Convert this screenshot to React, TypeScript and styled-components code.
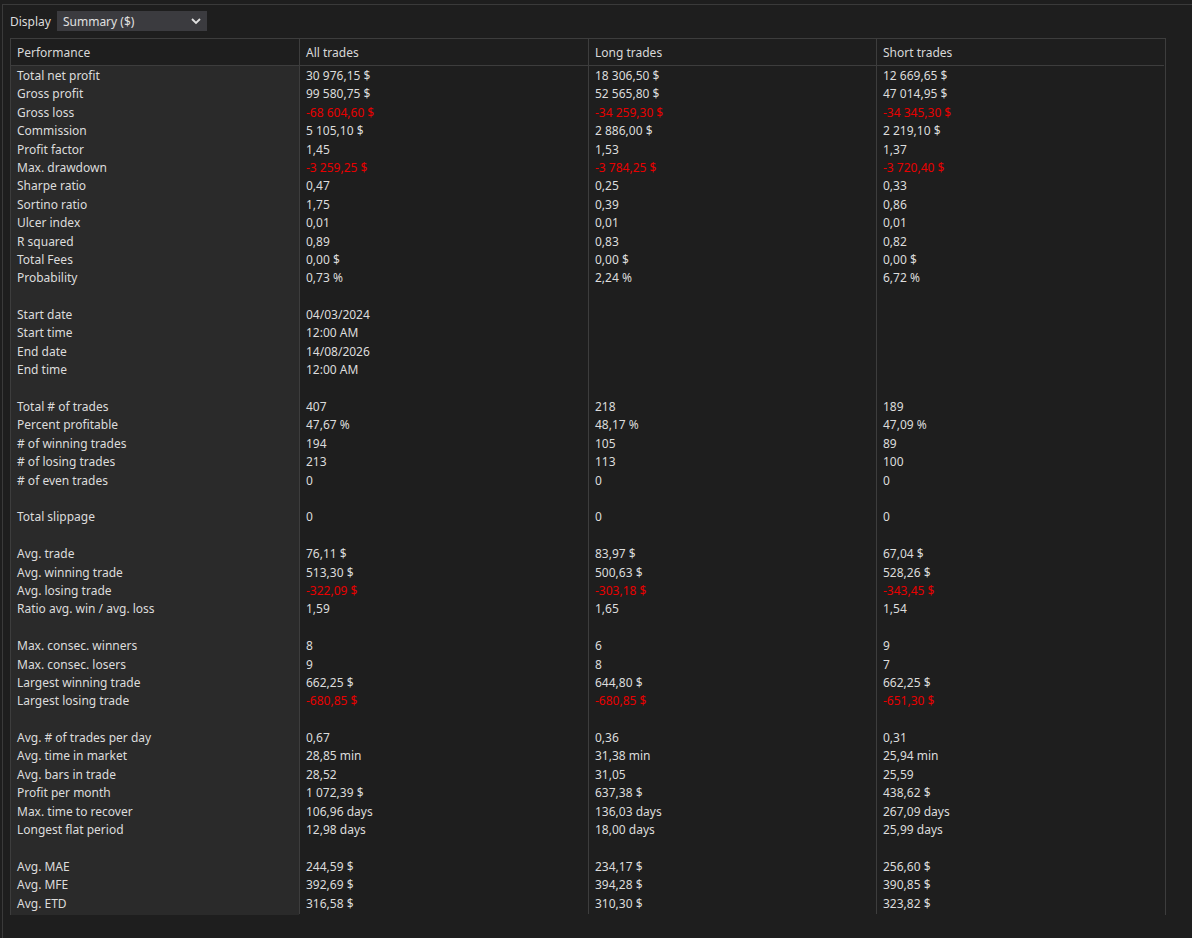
import React from "react";
import styled, { createGlobalStyle } from "styled-components";

const G = createGlobalStyle`
  html,body{margin:0;background:#1e1e1e;}
  body{font-family:"Noto Sans","Inter",sans-serif;font-size:12px;color:#dcdcdc;}
`;
const Page = styled.div`
  height:938px;box-sizing:border-box;border-top:1px solid #3a3a3a;margin-top:4px;
  border-left:1px solid #3a3a3a;margin-left:2px;padding:6px 0 0 7px;
`;
const Bar = styled.div`display:flex;align-items:center;gap:6px;height:20px;`;
const Select = styled.div`
  width:150px;height:20px;background:#3b3b3f;display:flex;align-items:center;justify-content:space-between;
  padding:0 6px;box-sizing:border-box;color:#e0e0e0;
`;
const Table = styled.div`
  margin-top:7px;width:1154px;display:grid;grid-template-columns:288px 289px 288px 288px;
  border-top:1px solid #3d3d3d;border-left:1px solid #3d3d3d;border-right:1px solid #3d3d3d;
`;
const H = styled.div<{ first?: boolean }>`
  height:26px;display:flex;align-items:center;padding-left:6px;border-bottom:1px solid #3d3d3d;
  border-left:${p => (p.first ? "none" : "1px solid #3d3d3d")};color:#d8d8d8;background:#1e1e1e;
`;
const Col = styled.div<{ label?: boolean }>`
  background:${p => (p.label ? "#2a2a2a" : "transparent")};padding:1px 0 0 6px;
  border-left:${p => (p.label ? "none" : "1px solid #3d3d3d")};height:848px;box-sizing:border-box;
`;
const Cell = styled.div<{ red?: boolean }>`
  height:18.4px;line-height:18.4px;white-space:nowrap;color:${p => (p.red ? "#e80000" : "#dcdcdc")};
`;
const R = (l: string, a = "", b = "", c = "") => [l, a, b, c];
const rows: string[][] = [
  R("Total net profit","30 976,15 $","18 306,50 $","12 669,65 $"),
  R("Gross profit","99 580,75 $","52 565,80 $","47 014,95 $"),
  R("Gross loss","-68 604,60 $","-34 259,30 $","-34 345,30 $"),
  R("Commission","5 105,10 $","2 886,00 $","2 219,10 $"),
  R("Profit factor","1,45","1,53","1,37"),
  R("Max. drawdown","-3 259,25 $","-3 784,25 $","-3 720,40 $"),
  R("Sharpe ratio","0,47","0,25","0,33"),
  R("Sortino ratio","1,75","0,39","0,86"),
  R("Ulcer index","0,01","0,01","0,01"),
  R("R squared","0,89","0,83","0,82"),
  R("Total Fees","0,00 $","0,00 $","0,00 $"),
  R("Probability","0,73 %","2,24 %","6,72 %"),
  R(""),
  R("Start date","04/03/2024"),
  R("Start time","12:00 AM"),
  R("End date","14/08/2026"),
  R("End time","12:00 AM"),
  R(""),
  R("Total # of trades","407","218","189"),
  R("Percent profitable","47,67 %","48,17 %","47,09 %"),
  R("# of winning trades","194","105","89"),
  R("# of losing trades","213","113","100"),
  R("# of even trades","0","0","0"),
  R(""),
  R("Total slippage","0","0","0"),
  R(""),
  R("Avg. trade","76,11 $","83,97 $","67,04 $"),
  R("Avg. winning trade","513,30 $","500,63 $","528,26 $"),
  R("Avg. losing trade","-322,09 $","-303,18 $","-343,45 $"),
  R("Ratio avg. win / avg. loss","1,59","1,65","1,54"),
  R(""),
  R("Max. consec. winners","8","6","9"),
  R("Max. consec. losers","9","8","7"),
  R("Largest winning trade","662,25 $","644,80 $","662,25 $"),
  R("Largest losing trade","-680,85 $","-680,85 $","-651,30 $"),
  R(""),
  R("Avg. # of trades per day","0,67","0,36","0,31"),
  R("Avg. time in market","28,85 min","31,38 min","25,94 min"),
  R("Avg. bars in trade","28,52","31,05","25,59"),
  R("Profit per month","1 072,39 $","637,38 $","438,62 $"),
  R("Max. time to recover","106,96 days","136,03 days","267,09 days"),
  R("Longest flat period","12,98 days","18,00 days","25,99 days"),
  R(""),
  R("Avg. MAE","244,59 $","234,17 $","256,60 $"),
  R("Avg. MFE","392,69 $","394,28 $","390,85 $"),
  R("Avg. ETD","316,58 $","310,30 $","323,82 $"),
];
const LabelCol = styled(Col)`height:auto;align-self:start;padding-bottom:2px;`;
export default function App() {
  const heads = ["Performance", "All trades", "Long trades", "Short trades"];
  return (
    <Page>
      <G />
      <Bar>
        <span>Display</span>
        <Select>
          <span>Summary ($)</span>
          <svg width="10" height="7" viewBox="0 0 10 7"><path d="M1 1l4 4 4-4" stroke="#e0e0e0" strokeWidth="1.8" fill="none" /></svg>
        </Select>
      </Bar>
      <Table>
        {heads.map((h, i) => <H key={h} first={i === 0}>{h}</H>)}
        {[0, 1, 2, 3].map(ci => {
          const C = ci === 0 ? LabelCol : Col;
          return (
            <C key={ci} label={ci === 0}>
              {rows.map((r, ri) => (
                <Cell key={ri} red={r[ci].startsWith("-")}>{r[ci] || "\u00a0"}</Cell>
              ))}
            </C>
          );
        })}
      </Table>
    </Page>
  );
}
